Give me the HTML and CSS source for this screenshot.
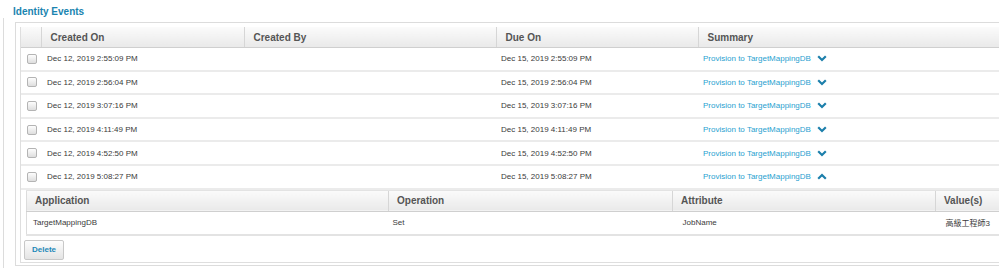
FILE: index.html
```html
<!DOCTYPE html>
<html>
<head>
<meta charset="utf-8">
<link rel="stylesheet" href="styles.css">
</head>
<body>
<div class="page">
  <h2 class="title">Identity Events</h2>
  <div class="section">
    <div class="panel">
      <div class="inner">
        <table class="events">
          <colgroup>
            <col class="c-check"><col class="c-created"><col class="c-by"><col class="c-due"><col class="c-sum">
          </colgroup>
          <thead>
            <tr><th></th><th>Created On</th><th>Created By</th><th>Due On</th><th>Summary</th></tr>
          </thead>
          <tbody>
            <tr><td class="chk"><input type="checkbox"></td><td>Dec 12, 2019 2:55:09 PM</td><td></td><td>Dec 15, 2019 2:55:09 PM</td><td><a class="sum">Provision to TargetMappingDB<svg class="chev" width="10" height="7" viewBox="0 0 10 7"><polyline points="1.2,1.3 5,5 8.8,1.3"/></svg></a></td></tr>
            <tr><td class="chk"><input type="checkbox"></td><td>Dec 12, 2019 2:56:04 PM</td><td></td><td>Dec 15, 2019 2:56:04 PM</td><td><a class="sum">Provision to TargetMappingDB<svg class="chev" width="10" height="7" viewBox="0 0 10 7"><polyline points="1.2,1.3 5,5 8.8,1.3"/></svg></a></td></tr>
            <tr><td class="chk"><input type="checkbox"></td><td>Dec 12, 2019 3:07:16 PM</td><td></td><td>Dec 15, 2019 3:07:16 PM</td><td><a class="sum">Provision to TargetMappingDB<svg class="chev" width="10" height="7" viewBox="0 0 10 7"><polyline points="1.2,1.3 5,5 8.8,1.3"/></svg></a></td></tr>
            <tr><td class="chk"><input type="checkbox"></td><td>Dec 12, 2019 4:11:49 PM</td><td></td><td>Dec 15, 2019 4:11:49 PM</td><td><a class="sum">Provision to TargetMappingDB<svg class="chev" width="10" height="7" viewBox="0 0 10 7"><polyline points="1.2,1.3 5,5 8.8,1.3"/></svg></a></td></tr>
            <tr><td class="chk"><input type="checkbox"></td><td>Dec 12, 2019 4:52:50 PM</td><td></td><td>Dec 15, 2019 4:52:50 PM</td><td><a class="sum">Provision to TargetMappingDB<svg class="chev" width="10" height="7" viewBox="0 0 10 7"><polyline points="1.2,1.3 5,5 8.8,1.3"/></svg></a></td></tr>
            <tr class="open"><td class="chk"><input type="checkbox"></td><td>Dec 12, 2019 5:08:27 PM</td><td></td><td>Dec 15, 2019 5:08:27 PM</td><td><a class="sum">Provision to TargetMappingDB<svg class="chev" width="10" height="7" viewBox="0 0 10 7"><polyline points="1.2,5.7 5,2 8.8,5.7"/></svg></a></td></tr>
            <tr class="detail">
              <td colspan="5">
                <table class="sub">
                  <colgroup>
                    <col class="s-app"><col class="s-op"><col class="s-attr"><col class="s-val">
                  </colgroup>
                  <thead>
                    <tr><th>Application</th><th>Operation</th><th>Attribute</th><th>Value(s)</th></tr>
                  </thead>
                  <tbody>
                    <tr><td>TargetMappingDB</td><td>Set</td><td>JobName</td><td>高級工程師3</td></tr>
                  </tbody>
                </table>
              </td>
            </tr>
          </tbody>
        </table>
        <div class="actions">
          <button class="btn">Delete</button>
        </div>
      </div>
    </div>
  </div>
</div>
</body>
</html>
```

FILE: styles.css
```css
html, body {
  margin: 0;
  padding: 0;
  background: #fff;
  overflow: hidden;
}
body {
  font-family: "Liberation Sans", Arial, "Noto Sans CJK TC", sans-serif;
  width: 999px;
  height: 268px;
}
.page {
  padding: 6px 0 0 0;
  width: 999px;
}
.title {
  margin: 0 0 0 13px;
  font-size: 10px;
  line-height: 12px;
  font-weight: bold;
  color: #1a84b0;
}
.section {
  margin-left: 3px;
  border-left: 1px solid #dcdcdc;
  padding: 4px 0 3px 11px;
}
.panel {
  border: 1px solid #dcdcdc;
  border-right: none;
  padding: 4px 0 2px 4px;
}
.inner {
  border: 1px solid #dedede;
  border-top: none;
  border-right: none;
}
table {
  border-collapse: collapse;
  table-layout: fixed;
}
.events {
  width: 100%;
}
.c-check { width: 20px; }
.c-created { width: 203px; }
.c-by { width: 252px; }
.c-due { width: 202px; }
.events > thead th {
  height: 20px;
  padding: 0 0 0 9px;
  text-align: left;
  font-size: 10px;
  font-weight: bold;
  color: #555;
  background: linear-gradient(#fbfbfb, #e9e9e9);
  border-bottom: 1px solid #cfcfcf;
  border-left: 1px solid #d6d6d6;
  white-space: nowrap;
}
.events > thead th:first-child {
  border-left: none;
  padding: 0;
}
.events > tbody > tr > td {
  height: 21.6px;
  padding: 0 0 0 6px;
  font-size: 8px;
  color: #3a3a3a;
  border-bottom: 2px solid #ebebeb;
  white-space: nowrap;
}
.events > tbody > tr > td:nth-child(4) { padding-left: 5px; }
.events > tbody > tr > td:nth-child(5) { padding-left: 5px; }
.events > tbody > tr > td.chk {
  padding: 0 0 0 6px;
}
.chk input {
  -webkit-appearance: none;
  appearance: none;
  display: block;
  width: 10px;
  height: 10px;
  margin: 0;
  border: 1px solid #b4b4b4;
  border-radius: 2px;
  background: linear-gradient(#fdfdfd, #dedede);
}
.sum {
  color: #2a9fd0;
  display: inline-flex;
  align-items: center;
}
.chev {
  margin-left: 6px;
  fill: none;
  stroke: #1c7fab;
  stroke-width: 2.2;
}
.events > tbody > tr.detail > td {
  padding: 0 0 0 5px;
  height: auto;
  border-bottom: none;
}
.sub {
  width: 100%;
  border-left: 1px solid #dcdcdc;
}
.s-app { width: 362px; }
.s-op { width: 284px; }
.s-attr { width: 263px; }
.sub th {
  height: 20px;
  padding: 0 0 0 8px;
  text-align: left;
  font-size: 10px;
  font-weight: bold;
  color: #555;
  background: linear-gradient(#fbfbfb, #e9e9e9);
  border-top: 1px solid #e3e3e3;
  border-bottom: 1px solid #cfcfcf;
  border-left: 1px solid #d6d6d6;
  white-space: nowrap;
}
.sub th:first-child { border-left: none; }
.sub td {
  height: 22px;
  padding: 0 0 0 6px;
  font-size: 8px;
  color: #3a3a3a;
  border-bottom: 2px solid #e3e3e3;
  white-space: nowrap;
}
.sub td:nth-child(2) { padding-left: 4px; }
.sub td:nth-child(3) { padding-left: 10px; }
.sub td:nth-child(4) { padding-left: 10px; }
.actions {
  padding: 4px 0 2px 3px;
}
.btn {
  display: block;
  width: 40px;
  height: 20px;
  padding: 0;
  font-family: inherit;
  font-size: 8px;
  font-weight: bold;
  color: #1e88b8;
  background: linear-gradient(#fdfdfd, #e4e4e4);
  border: 1px solid #c8c8c8;
  border-radius: 2px;
}
```
